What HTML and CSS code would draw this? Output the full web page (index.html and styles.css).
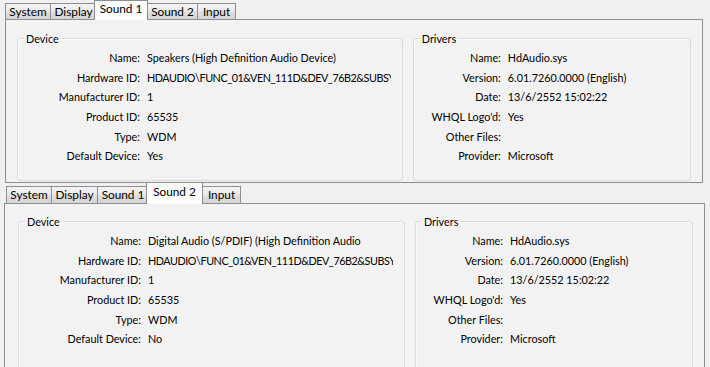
FILE: index.html
```html
<!DOCTYPE html>
<html lang="en">
<head>
    <meta charset="UTF-8">
    <meta name="viewport" content="width=device-width, initial-scale=1.0">
    <title>DirectX Diagnostic Tool - Sound</title>
    <link rel="stylesheet" href="styles.css">
</head>
<body>
    <div class="window first">
        <div class="tabs">
            <div class="tab w-system">System</div>
            <div class="tab w-display">Display</div>
            <div class="tab w-sound1 selected">Sound 1</div>
            <div class="tab w-sound2">Sound 2</div>
            <div class="tab w-input">Input</div>
        </div>
        <div class="page">
            <fieldset class="group device">
                <legend>Device</legend>
                <div class="rows">
                    <span class="label">Name:</span><span class="value">Speakers (High Definition Audio Device)</span>
                    <span class="label">Hardware ID:</span><span class="value tight">HDAUDIO\FUNC_01&amp;VEN_111D&amp;DEV_76B2&amp;SUBSY</span>
                    <span class="label">Manufacturer ID:</span><span class="value">1</span>
                    <span class="label">Product ID:</span><span class="value">65535</span>
                    <span class="label">Type:</span><span class="value">WDM</span>
                    <span class="label">Default Device:</span><span class="value">Yes</span>
                </div>
            </fieldset>
            <fieldset class="group drivers">
                <legend>Drivers</legend>
                <div class="rows">
                    <span class="label">Name:</span><span class="value">HdAudio.sys</span>
                    <span class="label">Version:</span><span class="value">6.01.7260.0000 (English)</span>
                    <span class="label">Date:</span><span class="value">13/6/2552 15:02:22</span>
                    <span class="label">WHQL Logo'd:</span><span class="value">Yes</span>
                    <span class="label">Other Files:</span><span class="value"></span>
                    <span class="label">Provider:</span><span class="value">Microsoft</span>
                </div>
            </fieldset>
        </div>
    </div>
    <div class="window second">
        <div class="tabs">
            <div class="tab w-system">System</div>
            <div class="tab w-display">Display</div>
            <div class="tab w-sound1">Sound 1</div>
            <div class="tab w-sound2 selected">Sound 2</div>
            <div class="tab w-input">Input</div>
        </div>
        <div class="page">
            <fieldset class="group device">
                <legend>Device</legend>
                <div class="rows">
                    <span class="label">Name:</span><span class="value">Digital Audio (S/PDIF) (High Definition Audio</span>
                    <span class="label">Hardware ID:</span><span class="value tight">HDAUDIO\FUNC_01&amp;VEN_111D&amp;DEV_76B2&amp;SUBSY</span>
                    <span class="label">Manufacturer ID:</span><span class="value">1</span>
                    <span class="label">Product ID:</span><span class="value">65535</span>
                    <span class="label">Type:</span><span class="value">WDM</span>
                    <span class="label">Default Device:</span><span class="value">No</span>
                </div>
            </fieldset>
            <fieldset class="group drivers">
                <legend>Drivers</legend>
                <div class="rows">
                    <span class="label">Name:</span><span class="value">HdAudio.sys</span>
                    <span class="label">Version:</span><span class="value">6.01.7260.0000 (English)</span>
                    <span class="label">Date:</span><span class="value">13/6/2552 15:02:22</span>
                    <span class="label">WHQL Logo'd:</span><span class="value">Yes</span>
                    <span class="label">Other Files:</span><span class="value"></span>
                    <span class="label">Provider:</span><span class="value">Microsoft</span>
                </div>
            </fieldset>
        </div>
    </div>
</body>
</html>
```

FILE: styles.css
```css
html, body {
    margin: 0;
    height: 100%;
    overflow: hidden;
}
body {
    background-color: #f0f0f0;
    font-family: Lato, "Liberation Sans", sans-serif;
    font-size: 10.8px;
    color: #000;
}

.window { box-sizing: border-box; }
.window.first {
    margin-left: 5px;
    width: 698px;
}
.window.second {
    margin-left: 4px;
    width: 701px;
}

.tabs {
    display: flex;
    align-items: flex-end;
    height: 19px;
    position: relative;
    z-index: 1;
    font-size: 11.8px;
}
.second .tabs { height: 20px; }

.tab {
    box-sizing: border-box;
    height: 16px;
    margin-right: -1px;
    border: 1px solid #8c8e94;
    border-bottom: none;
    background: linear-gradient(#f3f3f3, #ebebeb 45%, #dedede 55%, #d4d4d4);
    text-align: center;
    line-height: 15px;
    white-space: nowrap;
}
.second .tab { height: 17px; line-height: 16px; }

.tab.selected {
    position: relative;
    height: 20px;
    margin: 0 -1px -1px -2px;
    background: #fcfcfc;
    line-height: 16px;
}
.second .tab.selected { height: 22px; line-height: 18px; }

.w-system { width: 46px; }
.w-display { width: 47px; }
.w-sound1 { width: 52px; }
.w-sound2 { width: 51px; }
.w-input { width: 39px; }
.tab.selected.w-sound1 { width: 54px; }
.tab.selected.w-sound2 { width: 57px; }
.second .w-system { margin-left: 2px; }

.page {
    display: flex;
    gap: 10px;
    box-sizing: border-box;
    height: 164px;
    padding: 12px 11px 0 11px;
    border: 1px solid #8c8e94;
    background-color: #f2f2f2;
}
.second .page {
    height: 200px;
    padding: 11px 11px 0 13px;
}

.group {
    box-sizing: border-box;
    height: 149px;
    margin: 0;
    padding: 3px 11px 0 0;
    border: 1px solid #d7dde2;
    border-radius: 3px;
    box-shadow: inset 1px 1px 0 #fbfbfb;
}
.second .group { height: 190px; }
.group legend {
    margin-left: 6px;
    padding: 0 2px;
}
.device { width: 387px; }
.drivers { width: 279px; }
.second .drivers { width: 278px; }

.rows {
    display: grid;
    column-gap: 7px;
    grid-auto-rows: 19.6px;
    align-items: center;
}
.device .rows { grid-template-columns: 122px minmax(0, 1fr); }
.drivers .rows { grid-template-columns: 87px minmax(0, 1fr); }

.label { text-align: right; white-space: nowrap; }
.value { white-space: nowrap; overflow: hidden; }
.value.tight { letter-spacing: -0.45px; }
```
